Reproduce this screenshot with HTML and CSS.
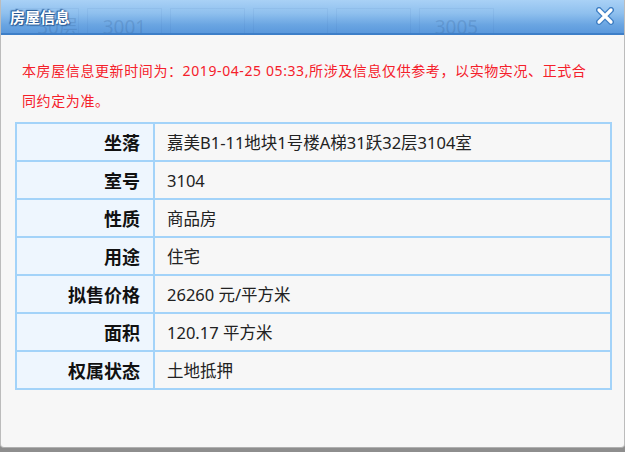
FILE: index.html
```html
<!DOCTYPE html>
<html lang="zh-CN">
<head>
<meta charset="utf-8">
<title>房屋信息</title>
<link rel="stylesheet" href="styles.css">
</head>
<body>
<div class="dialog">
  <div class="titlebar">
    <div class="ghost">
      <span class="ghost-cell first">30层</span>
      <span class="ghost-cell">3001</span>
      <span class="ghost-cell"></span>
      <span class="ghost-cell"></span>
      <span class="ghost-cell"></span>
      <span class="ghost-cell">3005</span>
    </div>
    <span class="title">房屋信息</span>
    <svg class="close" width="18" height="18" viewBox="0 0 18 18">
      <path d="M3 3 L15 15 M15 3 L3 15" stroke="#3f7fc4" stroke-width="6" stroke-linecap="round" fill="none"/>
      <path d="M3 3 L15 15 M15 3 L3 15" stroke="#ffffff" stroke-width="3.2" stroke-linecap="round" fill="none"/>
    </svg>
  </div>
  <div class="content">
    <p class="notice">本房屋信息更新时间为：2019-04-25 05:33,所涉及信息仅供参考，以实物实况、正式合同约定为准。</p>
    <table class="info">
      <tr><th>坐落</th><td>嘉美B1-11地块1号楼A梯31跃32层3104室</td></tr>
      <tr><th>室号</th><td>3104</td></tr>
      <tr><th>性质</th><td>商品房</td></tr>
      <tr><th>用途</th><td>住宅</td></tr>
      <tr><th>拟售价格</th><td>26260 元/平方米</td></tr>
      <tr><th>面积</th><td>120.17 平方米</td></tr>
      <tr><th>权属状态</th><td>土地抵押</td></tr>
    </table>
  </div>
</div>
</body>
</html>
```

FILE: styles.css
```css
html, body {
  margin: 0;
  padding: 0;
}
body {
  width: 625px;
  height: 452px;
  background: #8e8e8e;
  font-family: "Noto Sans", "Noto Sans CJK SC", sans-serif;
  overflow: hidden;
}
.dialog {
  box-sizing: border-box;
  width: 625px;
  height: 448px;
  background: #f7f7f7;
  border-left: 1px solid #bcbcbc;
  border-right: 1px solid #bcbcbc;
  border-bottom: 1px solid #b0b0b0;
  border-radius: 0 0 4px 4px;
  display: flex;
  flex-direction: column;
  overflow: hidden;
}
.titlebar {
  position: relative;
  height: 33px;
  flex: none;
  display: flex;
  align-items: center;
  justify-content: space-between;
  padding: 0 10px 0 9px;
  background: linear-gradient(#a9d1f6 0%, #8fc0ee 40%, #6aa5e2 75%, #5b99dc 100%);
  border-bottom: 2px solid #3e7fc8;
  overflow: hidden;
}
.ghost {
  position: absolute;
  left: 14px;
  top: 8px;
  display: flex;
  gap: 8px;
}
.ghost-cell {
  width: 75px;
  height: 40px;
  box-sizing: border-box;
  border: 1px solid rgba(40, 90, 150, 0.07);
  color: rgba(40, 80, 130, 0.2);
  font-size: 19px;
  line-height: 24px;
  padding-top: 6px;
  text-align: center;
}
.ghost-cell.first {
  width: 64px;
  text-align: right;
  padding-right: 0;
  border-left: none;
}
.title {
  position: relative;
  color: #ffffff;
  font-weight: bold;
  font-size: 15px;
  font-family: "Noto Sans CJK SC", sans-serif;
  text-shadow: 0 0 2px #1f4f8a, 1px 1px 1px #2a5d9a, -1px -1px 1px #2a5d9a;
}
.close {
  position: relative;
  margin-top: -2px;
}
.content {
  padding: 21px 14px 0 14px;
}
.notice {
  width: 575px;
  margin: 0 0 6px 7px;
  color: #f5202a;
  font-size: 14px;
  line-height: 30px;
  letter-spacing: 0.6px;
  font-family: "Noto Sans", "Noto Sans CJK SC", sans-serif;
}
.info {
  width: 597px;
  border-collapse: collapse;
  border: 2px solid #a3d3f9;
  font-size: 16px;
  color: #222;
}
.info th, .info td {
  height: 38px;
  box-sizing: border-box;
  border: 2px solid #a3d3f9;
  padding: 0;
}
.info th {
  width: 138px;
  background: #eef6fe;
  text-align: right;
  padding-right: 13px;
  font-size: 18px;
  font-weight: bold;
  color: #111;
  font-family: "Noto Sans CJK SC", sans-serif;
}
.info td {
  padding-left: 12px;
  background: #f7f7f7;
  font-size: 16.5px;
}
```
